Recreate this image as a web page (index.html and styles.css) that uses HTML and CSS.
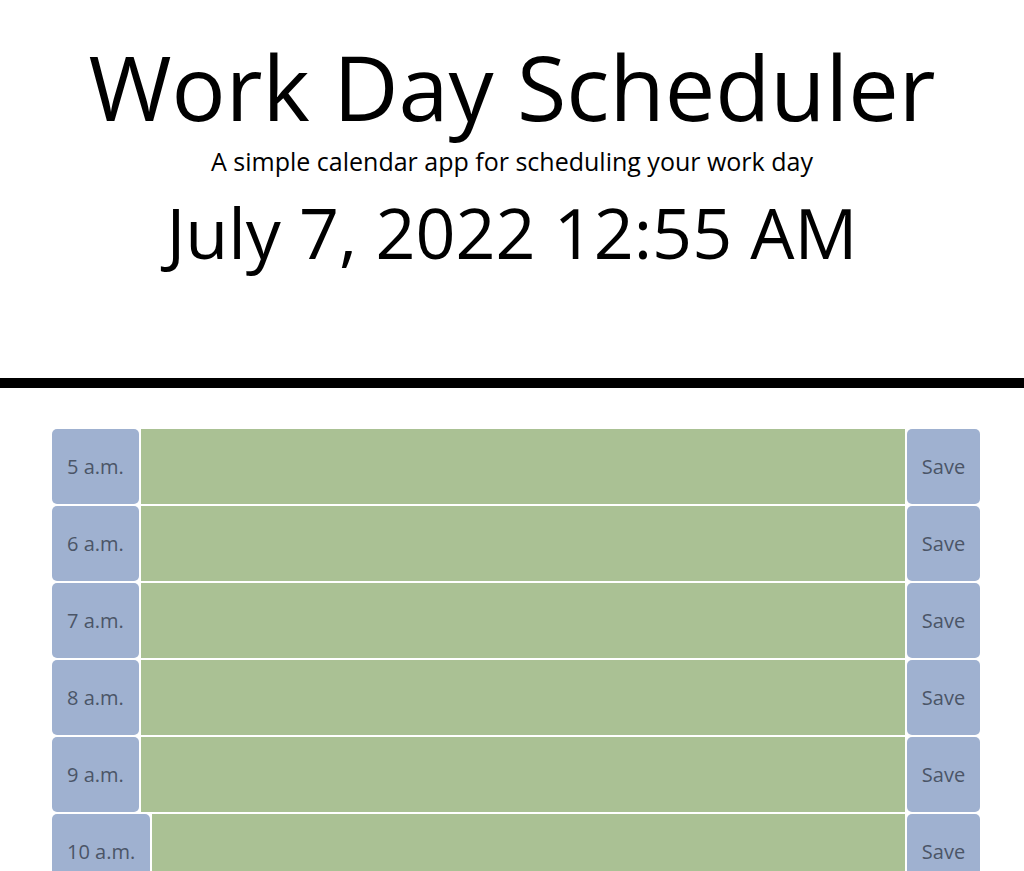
FILE: index.html
```html
<!DOCTYPE html>
<html lang="en">
<head>
<meta charset="utf-8">
<title>Work Day Scheduler</title>
<link rel="stylesheet" href="styles.css">
</head>
<body>
<header class="jumbotron">
  <h1 class="title">Work Day Scheduler</h1>
  <p class="lead">A simple calendar app for scheduling your work day</p>
  <p class="current-day">July 7, 2022 12:55 AM</p>
</header>
<main class="container">
  <div class="time-block"><div class="hour">5 a.m.</div><textarea class="description future"></textarea><button class="save-btn">Save</button></div>
  <div class="time-block"><div class="hour">6 a.m.</div><textarea class="description future"></textarea><button class="save-btn">Save</button></div>
  <div class="time-block"><div class="hour">7 a.m.</div><textarea class="description future"></textarea><button class="save-btn">Save</button></div>
  <div class="time-block"><div class="hour">8 a.m.</div><textarea class="description future"></textarea><button class="save-btn">Save</button></div>
  <div class="time-block"><div class="hour">9 a.m.</div><textarea class="description future"></textarea><button class="save-btn">Save</button></div>
  <div class="time-block"><div class="hour">10 a.m.</div><textarea class="description future"></textarea><button class="save-btn">Save</button></div>
  <div class="time-block"><div class="hour">11 a.m.</div><textarea class="description future"></textarea><button class="save-btn">Save</button></div>
</main>
</body>
</html>
```
FILE: styles.css
```css
* { box-sizing: border-box; }
body {
  margin: 0;
  font-family: "Open Sans", "Liberation Sans", sans-serif;
  color: #000;
  background: #fff;
}
.jumbotron {
  text-align: center;
  border-bottom: 10px solid #000;
  padding: 41px 0 0;
  height: 388px;
}
.title {
  margin: 0;
  font-size: 90px;
  font-weight: 400;
  line-height: 1;
}
.lead {
  margin: 13px 0 0;
  font-size: 25px;
  line-height: 1.4;
}
.current-day {
  margin: 11px 0 0;
  font-size: 70px;
  line-height: 1.2;
}
.container {
  width: 928px;
  margin: 41px 0 0 52px;
  display: flex;
  flex-direction: column;
  gap: 2px;
}
.time-block {
  display: flex;
  height: 75px;
  gap: 2px;
}
.hour {
  flex: 0 0 auto;
  padding: 0 15px;
  display: flex;
  align-items: center;
  background: #9fb1d0;
  border-radius: 5px;
  color: #4b5567;
  font-size: 20px;
}
.description {
  flex: 1 1 auto;
  border: 0;
  margin: 0;
  background: #aac194;
  resize: none;
  font-family: inherit;
}
.save-btn {
  flex: 0 0 73px;
  border: 0;
  border-radius: 5px;
  background: #9fb1d0;
  color: #4b5567;
  font-family: inherit;
  font-size: 20px;
  padding: 0;
}
```
